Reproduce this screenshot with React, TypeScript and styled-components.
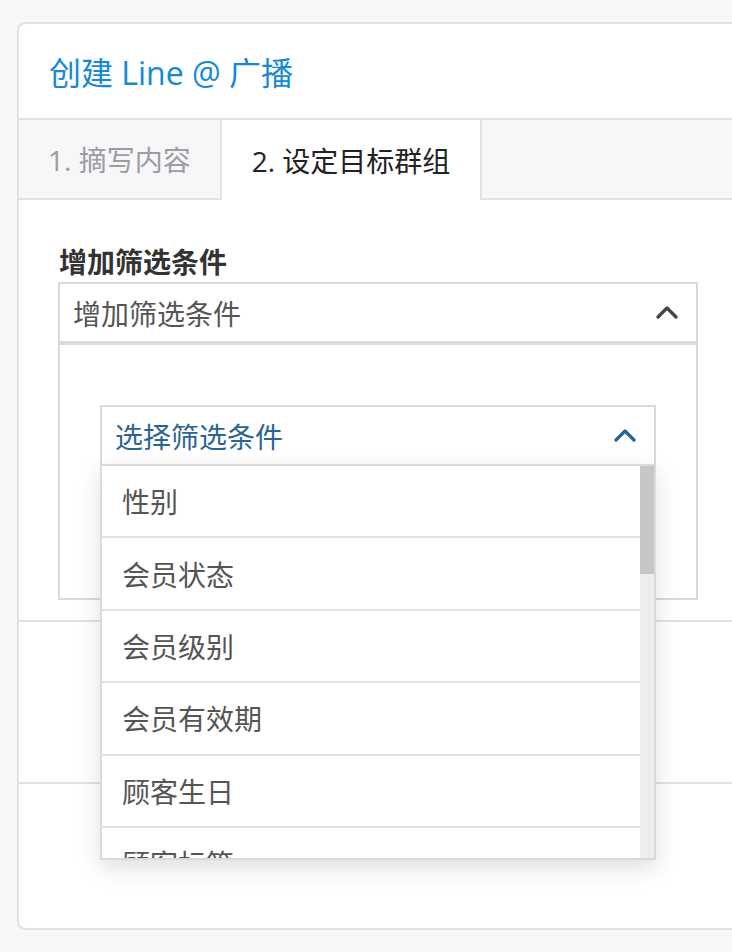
import React from "react";
import styled, { createGlobalStyle } from "styled-components";

const FONT = `"Open Sans", "Noto Sans CJK SC", sans-serif`;
const LINE = "#e2e2e2";
const FIELD_BORDER = "#dadada";

const GlobalStyle = createGlobalStyle`
  html, body {
    margin: 0;
    padding: 0;
    background: #f7f7f7;
    overflow: hidden;
  }
  body {
    font-family: ${FONT};
    padding: 22px 0 0 17px;
  }
`;

const Card = styled.div`
  width: 760px;
  background: #fff;
  border: 2px solid ${LINE};
  border-radius: 8px;
`;

const CardHeader = styled.div`
  height: 94px;
  display: flex;
  align-items: center;
  padding-left: 30px;
  border-bottom: 2px solid ${LINE};
`;

const Title = styled.h3`
  margin: 0;
  font-size: 32px;
  font-weight: 400;
  color: #1689d6;
`;

const TabBar = styled.div`
  display: flex;
  height: 78px;
  background: #f7f7f7;
  border-bottom: 2px solid ${LINE};
`;

const Tab = styled.div<{ active?: boolean }>`
  display: flex;
  align-items: center;
  padding: 0 ${({ active }) => (active ? "30px" : "27px")};
  font-size: 28px;
  color: ${({ active }) => (active ? "#222" : "#9a9ca6")};
  background: ${({ active }) => (active ? "#fff" : "transparent")};
  border-left: 2px solid ${({ active }) => (active ? LINE : "transparent")};
  border-right: 2px solid ${({ active }) => (active ? LINE : "transparent")};
  height: ${({ active }) => (active ? "80px" : "78px")};
  box-sizing: border-box;
`;

const Content = styled.div`
  padding: 42px 40px 20px 39px;
  border-bottom: 2px solid ${LINE};
`;

const Form = styled.div`
  width: 640px;
`;

const Label = styled.div`
  font-size: 28px;
  line-height: 40px;
  font-weight: 700;
  color: #333;
  padding-left: 1px;
`;

const Select = styled.div<{ tone?: "plain" | "link" }>`
  position: relative;
  height: 57px;
  display: flex;
  align-items: center;
  justify-content: space-between;
  padding: 0 18px 0 13px;
  border: 2px solid ${FIELD_BORDER};
  background: #fff;
  font-size: 28px;
  color: ${({ tone }) => (tone === "link" ? "#2a6497" : "#555")};
`;

const Chevron = ({ color }: { color: string }) => (
  <svg width="22" height="13" viewBox="0 0 22 13" fill="none">
    <polyline
      points="2,11 11,2 20,11"
      stroke={color}
      strokeWidth="3.2"
      strokeLinecap="round"
      strokeLinejoin="round"
    />
  </svg>
);

const Panel = styled.div`
  border: 2px solid ${FIELD_BORDER};
  padding: 60px 40px 132px 40px;
`;

// dropdown overlay under the inner select
const Menu = styled.div`
  position: absolute;
  top: 100%;
  left: -2px;
  right: -2px;
  height: 392px;
  display: flex;
  overflow: hidden;
  background: #fff;
  border: 2px solid ${FIELD_BORDER};
  box-shadow: 0 8px 22px rgba(0, 0, 0, 0.13);
  z-index: 10;
`;

const MenuList = styled.ul`
  flex: 1;
  margin: 0;
  padding: 0;
  list-style: none;
  overflow: hidden;
`;

const MenuItem = styled.li`
  height: 70.4px;
  display: flex;
  align-items: center;
  padding-left: 20px;
  font-size: 28px;
  color: #555;
  border-bottom: 2px solid ${LINE};
`;

const ScrollTrack = styled.div`
  width: 14px;
  background: #ededed;
`;

const ScrollThumb = styled.div`
  height: 108px;
  background: #c6c6c6;
`;

const Section = styled.div<{ h: number; last?: boolean }>`
  height: ${({ h }) => h}px;
  border-bottom: ${({ last }) => (last ? "none" : `2px solid ${LINE}`)};
`;

const filters = ["性别", "会员状态", "会员级别", "会员有效期", "顾客生日", "顾客标签"];

export default function App() {
  return (
    <>
      <GlobalStyle />
      <Card>
        <CardHeader>
          <Title>创建 Line @ 广播</Title>
        </CardHeader>
        <TabBar>
          <Tab>1. 摘写内容</Tab>
          <Tab active>2. 设定目标群组</Tab>
        </TabBar>
        <Content>
          <Form>
            <Label>增加筛选条件</Label>
            <Select>
              <span>增加筛选条件</span>
              <Chevron color="#444" />
            </Select>
            <Panel>
              <Select tone="link">
                <span>选择筛选条件</span>
                <Chevron color="#2a6497" />
                <Menu>
                  <MenuList>
                    {filters.map((f) => (
                      <MenuItem key={f}>{f}</MenuItem>
                    ))}
                  </MenuList>
                  <ScrollTrack>
                    <ScrollThumb />
                  </ScrollTrack>
                </Menu>
              </Select>
            </Panel>
          </Form>
        </Content>
        <Section h={160} />
        <Section h={144} last />
      </Card>
    </>
  );
}
